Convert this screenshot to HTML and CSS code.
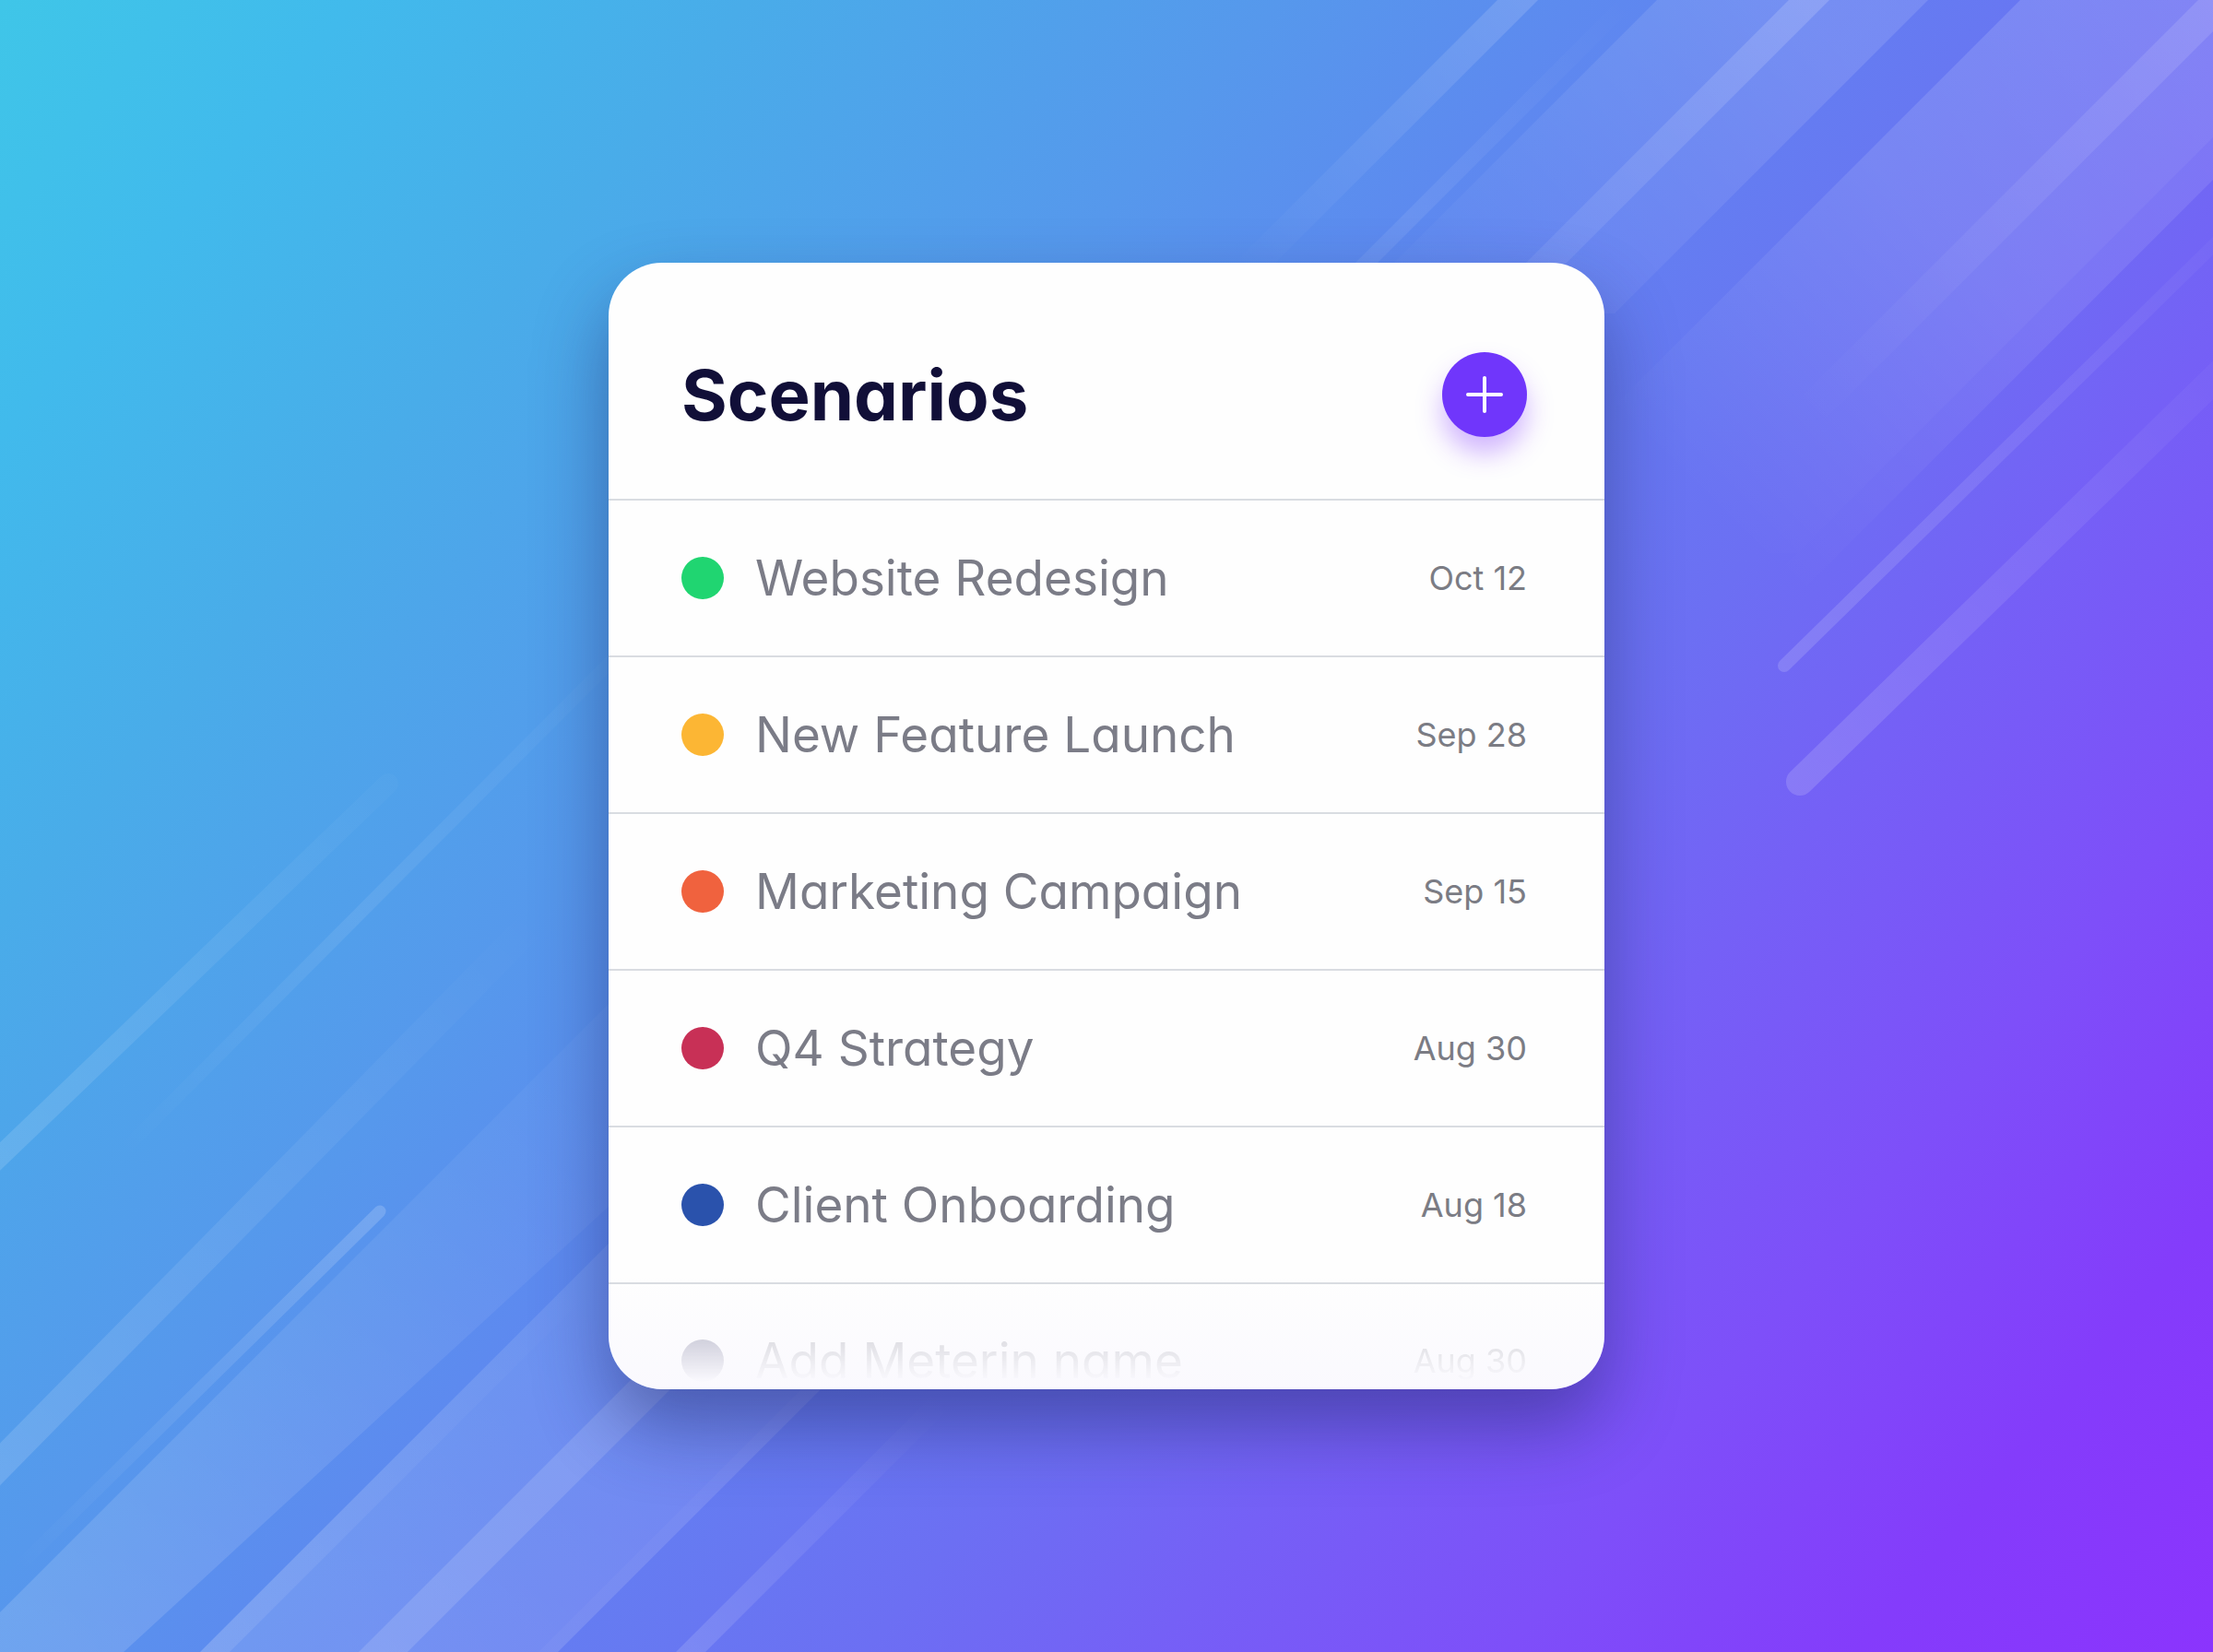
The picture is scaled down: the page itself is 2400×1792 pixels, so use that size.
FILE: index.html
```html
<!DOCTYPE html>
<html lang="en">
<head>
<meta charset="utf-8">
<meta name="viewport" content="width=device-width, initial-scale=1">
<title>Scenarios</title>
<link rel="stylesheet" href="styles.css">
</head>
<body class="page">
  <svg class="backdrop" viewBox="0 0 2400 1792" preserveAspectRatio="xMidYMid slice" aria-hidden="true">
    <defs>
      <linearGradient id="fadeA" gradientUnits="userSpaceOnUse" x1="1646" y1="0" x2="1346" y2="300"><stop offset="0" stop-color="#fff" stop-opacity=".14"/><stop offset="1" stop-color="#fff" stop-opacity="0"/></linearGradient>
      <linearGradient id="fadeThin" gradientUnits="userSpaceOnUse" x1="1767" y1="0" x2="1467" y2="300"><stop offset="0" stop-color="#fff" stop-opacity="0"/><stop offset=".8" stop-color="#fff" stop-opacity=".08"/><stop offset="1" stop-color="#fff" stop-opacity=".06"/></linearGradient>
      <linearGradient id="fadeB" gradientUnits="userSpaceOnUse" x1="1940" y1="0" x2="1600" y2="340"><stop offset="0" stop-color="#fff" stop-opacity=".12"/><stop offset="1" stop-color="#fff" stop-opacity=".02"/></linearGradient>
      <linearGradient id="fadeB2" gradientUnits="userSpaceOnUse" x1="1962" y1="0" x2="1642" y2="320"><stop offset="0" stop-color="#fff" stop-opacity=".16"/><stop offset="1" stop-color="#fff" stop-opacity=".06"/></linearGradient>
      <linearGradient id="fadeC" gradientUnits="userSpaceOnUse" x1="2400" y1="0" x2="1850" y2="550"><stop offset="0" stop-color="#fff" stop-opacity=".15"/><stop offset=".5" stop-color="#fff" stop-opacity=".11"/><stop offset="1" stop-color="#fff" stop-opacity="0"/></linearGradient>
      <linearGradient id="fadeC2" gradientUnits="userSpaceOnUse" x1="2420" y1="0" x2="1960" y2="460"><stop offset="0" stop-color="#fff" stop-opacity=".13"/><stop offset="1" stop-color="#fff" stop-opacity="0"/></linearGradient>
      <linearGradient id="fadeD" gradientUnits="userSpaceOnUse" x1="1935" y1="722" x2="2400" y2="267"><stop offset="0" stop-color="#fff" stop-opacity=".15"/><stop offset="1" stop-color="#fff" stop-opacity=".03"/></linearGradient>
      <linearGradient id="fadeE" gradientUnits="userSpaceOnUse" x1="1952" y1="848" x2="2400" y2="412"><stop offset="0" stop-color="#fff" stop-opacity=".15"/><stop offset="1" stop-color="#fff" stop-opacity=".03"/></linearGradient>
      <linearGradient id="fadeF" gradientUnits="userSpaceOnUse" x1="0" y1="1258" x2="421" y2="851"><stop offset="0" stop-color="#fff" stop-opacity=".13"/><stop offset="1" stop-color="#fff" stop-opacity=".02"/></linearGradient>
      <linearGradient id="fadeG" gradientUnits="userSpaceOnUse" x1="130" y1="1255" x2="640" y2="740"><stop offset="0" stop-color="#fff" stop-opacity="0"/><stop offset=".5" stop-color="#fff" stop-opacity=".08"/><stop offset="1" stop-color="#fff" stop-opacity=".02"/></linearGradient>
      <linearGradient id="fadeH" gradientUnits="userSpaceOnUse" x1="0" y1="1596" x2="580" y2="990"><stop offset="0" stop-color="#fff" stop-opacity=".14"/><stop offset="1" stop-color="#fff" stop-opacity="0"/></linearGradient>
      <linearGradient id="fadeI" gradientUnits="userSpaceOnUse" x1="412" y1="1317" x2="20" y2="1706"><stop offset="0" stop-color="#fff" stop-opacity=".17"/><stop offset="1" stop-color="#fff" stop-opacity="0"/></linearGradient>
      <linearGradient id="fadeJ" gradientUnits="userSpaceOnUse" x1="60" y1="1780" x2="640" y2="1200"><stop offset="0" stop-color="#fff" stop-opacity=".14"/><stop offset="1" stop-color="#fff" stop-opacity=".03"/></linearGradient>
      <linearGradient id="fadeK" gradientUnits="userSpaceOnUse" x1="240" y1="1792" x2="640" y2="1392"><stop offset="0" stop-color="#fff" stop-opacity=".09"/><stop offset="1" stop-color="#fff" stop-opacity="0"/></linearGradient>
      <linearGradient id="fadeL" gradientUnits="userSpaceOnUse" x1="400" y1="1792" x2="820" y2="1372"><stop offset="0" stop-color="#fff" stop-opacity=".12"/><stop offset="1" stop-color="#fff" stop-opacity=".07"/></linearGradient>
      <linearGradient id="fadeN" gradientUnits="userSpaceOnUse" x1="760" y1="1792" x2="1030" y2="1520"><stop offset="0" stop-color="#fff" stop-opacity=".13"/><stop offset="1" stop-color="#fff" stop-opacity="0"/></linearGradient>
    </defs>
    <path d="M1668 0H1624L1324 300H1368Z" fill="url(#fadeA)"/>
    <path d="M1779 0H1755L1455 300H1479Z" fill="url(#fadeThin)"/>
    <path d="M2091 0H1797L1457 340H1751Z" fill="url(#fadeB)"/>
    <path d="M1984 0H1940L1620 320H1664Z" fill="url(#fadeB2)"/>
    <path d="M2549 0H2191L1591 600H1949Z" fill="url(#fadeC)"/>
    <path d="M2595 0H2549L1849 700H1895Z" fill="url(#fadeC)" opacity=".7"/>
    <path d="M2434 0H2384L1884 500H1934Z" fill="url(#fadeC2)"/>
    <path d="M1935 722L2460 208" stroke="url(#fadeD)" stroke-width="14" stroke-linecap="round"/>
    <path d="M1952 848L2460 354" stroke="url(#fadeE)" stroke-width="30" stroke-linecap="round"/>
    <path d="M-40 1293L421 850" stroke="url(#fadeF)" stroke-width="22" stroke-linecap="round"/>
    <path d="M130 1252L680 700" stroke="url(#fadeG)" stroke-width="14"/>
    <path d="M-40 1629L640 938" stroke="url(#fadeH)" stroke-width="32"/>
    <path d="M412 1314L20 1700" stroke="url(#fadeI)" stroke-width="13" stroke-linecap="round"/>
    <path d="M-60 1809L700 1049V1272L84 1838Z" fill="url(#fadeJ)"/>
    <path d="M217 1792H249L680 1361V1329Z" fill="url(#fadeK)"/>
    <path d="M217 1792H605L905 1492V1104Z" fill="url(#fadeL)"/>
    <path d="M389 1792H442L752 1482H699Z" fill="#fff" fill-opacity=".13"/>
    <path d="M584 1792H605L905 1492H884Z" fill="#fff" fill-opacity=".03"/>
    <path d="M733 1792H765L1045 1512H1013Z" fill="url(#fadeN)"/>
  </svg>

  <main class="card">
    <header class="card-header">
      <h1 class="card-title">Scenarios</h1>
      <button class="add-button" type="button" aria-label="Add scenario">
        <svg class="add-icon" viewBox="0 0 40 40" aria-hidden="true"><path d="M20 2V38M2 20H38" stroke="#fff" stroke-width="4" stroke-linecap="round"/></svg>
      </button>
    </header>
    <ul class="scenario-list">
      <li class="scenario"><span class="dot dot-green"></span><span class="scenario-name">Website Redesign</span><time class="scenario-date">Oct 12</time></li>
      <li class="scenario"><span class="dot dot-amber"></span><span class="scenario-name">New Feature Launch</span><time class="scenario-date">Sep 28</time></li>
      <li class="scenario"><span class="dot dot-orange"></span><span class="scenario-name">Marketing Campaign</span><time class="scenario-date">Sep 15</time></li>
      <li class="scenario"><span class="dot dot-crimson"></span><span class="scenario-name">Q4 Strategy</span><time class="scenario-date">Aug 30</time></li>
      <li class="scenario"><span class="dot dot-blue"></span><span class="scenario-name">Client Onboarding</span><time class="scenario-date">Aug 18</time></li>
      <li class="scenario-peek"><div class="scenario scenario-fading"><span class="dot dot-grey"></span><span class="scenario-name">Add Meterin name</span><time class="scenario-date">Aug 30</time></div></li>
    </ul>
  </main>
</body>
</html>
```

FILE: styles.css
```css
* {
  box-sizing: border-box;
}

.page {
  margin: 0;
  min-height: 100vh;
  display: flex;
  align-items: center;
  justify-content: center;
  font-family: Inter, "Open Sans", sans-serif;
  font-feature-settings: "cv11";
  background: linear-gradient(129deg, #3fc6e8 0%, #41baec 10%, #49ace9 21%, #5698ec 36%, #5f86f0 47%, #6c6ff3 62%, #7560f6 70%, #7e4ff9 80%, #843cfb 90%, #8b34fd 100%);
}

.backdrop {
  position: absolute;
  inset: 0;
  width: 100%;
  height: 100%;
}

.card {
  position: relative;
  width: 45%;
  min-width: 960px;
  border-radius: 58px;
  overflow: hidden;
  background: linear-gradient(#fefefe, #fefefe 90%, #faf9fe);
  box-shadow: 0 40px 80px rgba(28, 34, 96, 0.46);
}

.card-header {
  display: flex;
  align-items: center;
  justify-content: space-between;
  padding: 97px 84px 67px 79px;
  border-bottom: 2px solid #d9dce1;
}

.card-title {
  margin: 0;
  font-size: 76px;
  line-height: 92px;
  font-weight: 700;
  color: #110f38;
}

.add-button {
  display: flex;
  align-items: center;
  justify-content: center;
  width: 92px;
  height: 92px;
  padding: 0;
  border: 0;
  border-radius: 50%;
  background: #7036fb;
  box-shadow: 0 18px 28px rgba(124, 44, 255, 0.34);
  cursor: pointer;
}

.add-icon {
  width: 40px;
  height: 40px;
}

.scenario-list {
  margin: 0;
  padding: 0;
  list-style: none;
}

.scenario {
  display: flex;
  align-items: center;
  gap: 34px;
  height: 170px;
  padding: 0 84px 0 79px;
  border-bottom: 2px solid #d9dce1;
}

.dot {
  flex: none;
  width: 46px;
  height: 46px;
  border-radius: 50%;
}

.dot-green { background: #20d571; }
.dot-amber { background: #fcb634; }
.dot-orange { background: #f0623e; }
.dot-crimson { background: #c83056; }
.dot-blue { background: #2a52ac; }
.dot-grey { background: #3c3c68; }

.scenario-name {
  flex: 1;
  font-size: 53px;
  line-height: 64px;
  color: #7b7c87;
}

.scenario-date {
  font-size: 36px;
  line-height: 44px;
  color: #7b7c84;
}

.scenario-peek {
  height: 114px;
  overflow: hidden;
}

.scenario-fading {
  height: 166px;
  border-bottom: 0;
  -webkit-mask-image: linear-gradient(rgba(0, 0, 0, 0.22) 60px, transparent 106px);
  mask-image: linear-gradient(rgba(0, 0, 0, 0.22) 60px, transparent 106px);
}
```
